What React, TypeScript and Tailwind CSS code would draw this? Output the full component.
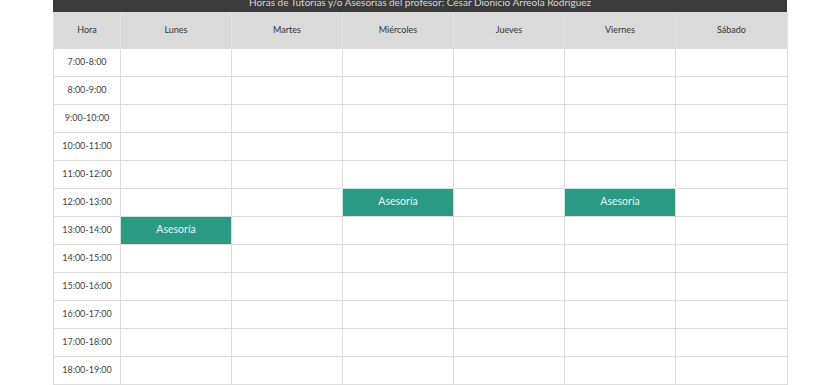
import React from "react";

const days = ["Lunes", "Martes", "Miércoles", "Jueves", "Viernes", "Sábado"];
const hours = [
  "7:00-8:00",
  "8:00-9:00",
  "9:00-10:00",
  "10:00-11:00",
  "11:00-12:00",
  "12:00-13:00",
  "13:00-14:00",
  "14:00-15:00",
  "15:00-16:00",
  "16:00-17:00",
  "17:00-18:00",
  "18:00-19:00",
  "19:00-20:00",
];

const slots: Record<string, number[]> = {
  "12:00-13:00": [2, 4],
  "13:00-14:00": [0],
};

export default function App() {
  return (
    <div
      className="w-[840px] h-[385px] overflow-hidden bg-white"
      style={{ fontFamily: "Lato, 'Open Sans', sans-serif" }}
    >
      <div className="ml-[53px] w-[734px]">
        <div className="h-[12px] overflow-hidden bg-[#3b3b3b] text-center">
          <div className="-mt-[5px] text-[10px] leading-[14px] text-[#d8d8d8]">
            Horas de Tutorías y/o Asesorías del profesor: César Dionicio Arreola Rodríguez
          </div>
        </div>
        <table className="w-[734px] table-fixed border-collapse">
          <colgroup>
            <col className="w-[67px]" />
            <col className="w-[111px]" />
            <col className="w-[111px]" />
            <col className="w-[111px]" />
            <col className="w-[111px]" />
            <col className="w-[111px]" />
            <col className="w-[112px]" />
          </colgroup>
          <thead>
            <tr className="h-[36px] bg-[#dadada]">
              <th className="border-x border-[#e3e3e3] text-[9px] font-normal text-[#333]">Hora</th>
              {days.map((d) => (
                <th key={d} className="border-x border-[#e3e3e3] text-[9px] font-normal text-[#333]">
                  {d}
                </th>
              ))}
            </tr>
          </thead>
          <tbody>
            {hours.map((h) => (
              <tr key={h} className="h-[28px]">
                <td className="border border-[#dcdcdc] p-0 text-center text-[9px] text-[#444]">{h}</td>
                {days.map((d, i) => {
                  const on = (slots[h] || []).includes(i);
                  return (
                    <td
                      key={d}
                      className={
                        on
                          ? "border border-[#dcdcdc] bg-[#2a9a84] p-0 text-center text-[10.5px] text-[#e8f5f2]"
                          : "border border-[#dcdcdc] p-0"
                      }
                    >
                      {on ? "Asesoría" : ""}
                    </td>
                  );
                })}
              </tr>
            ))}
          </tbody>
        </table>
      </div>
    </div>
  );
}
